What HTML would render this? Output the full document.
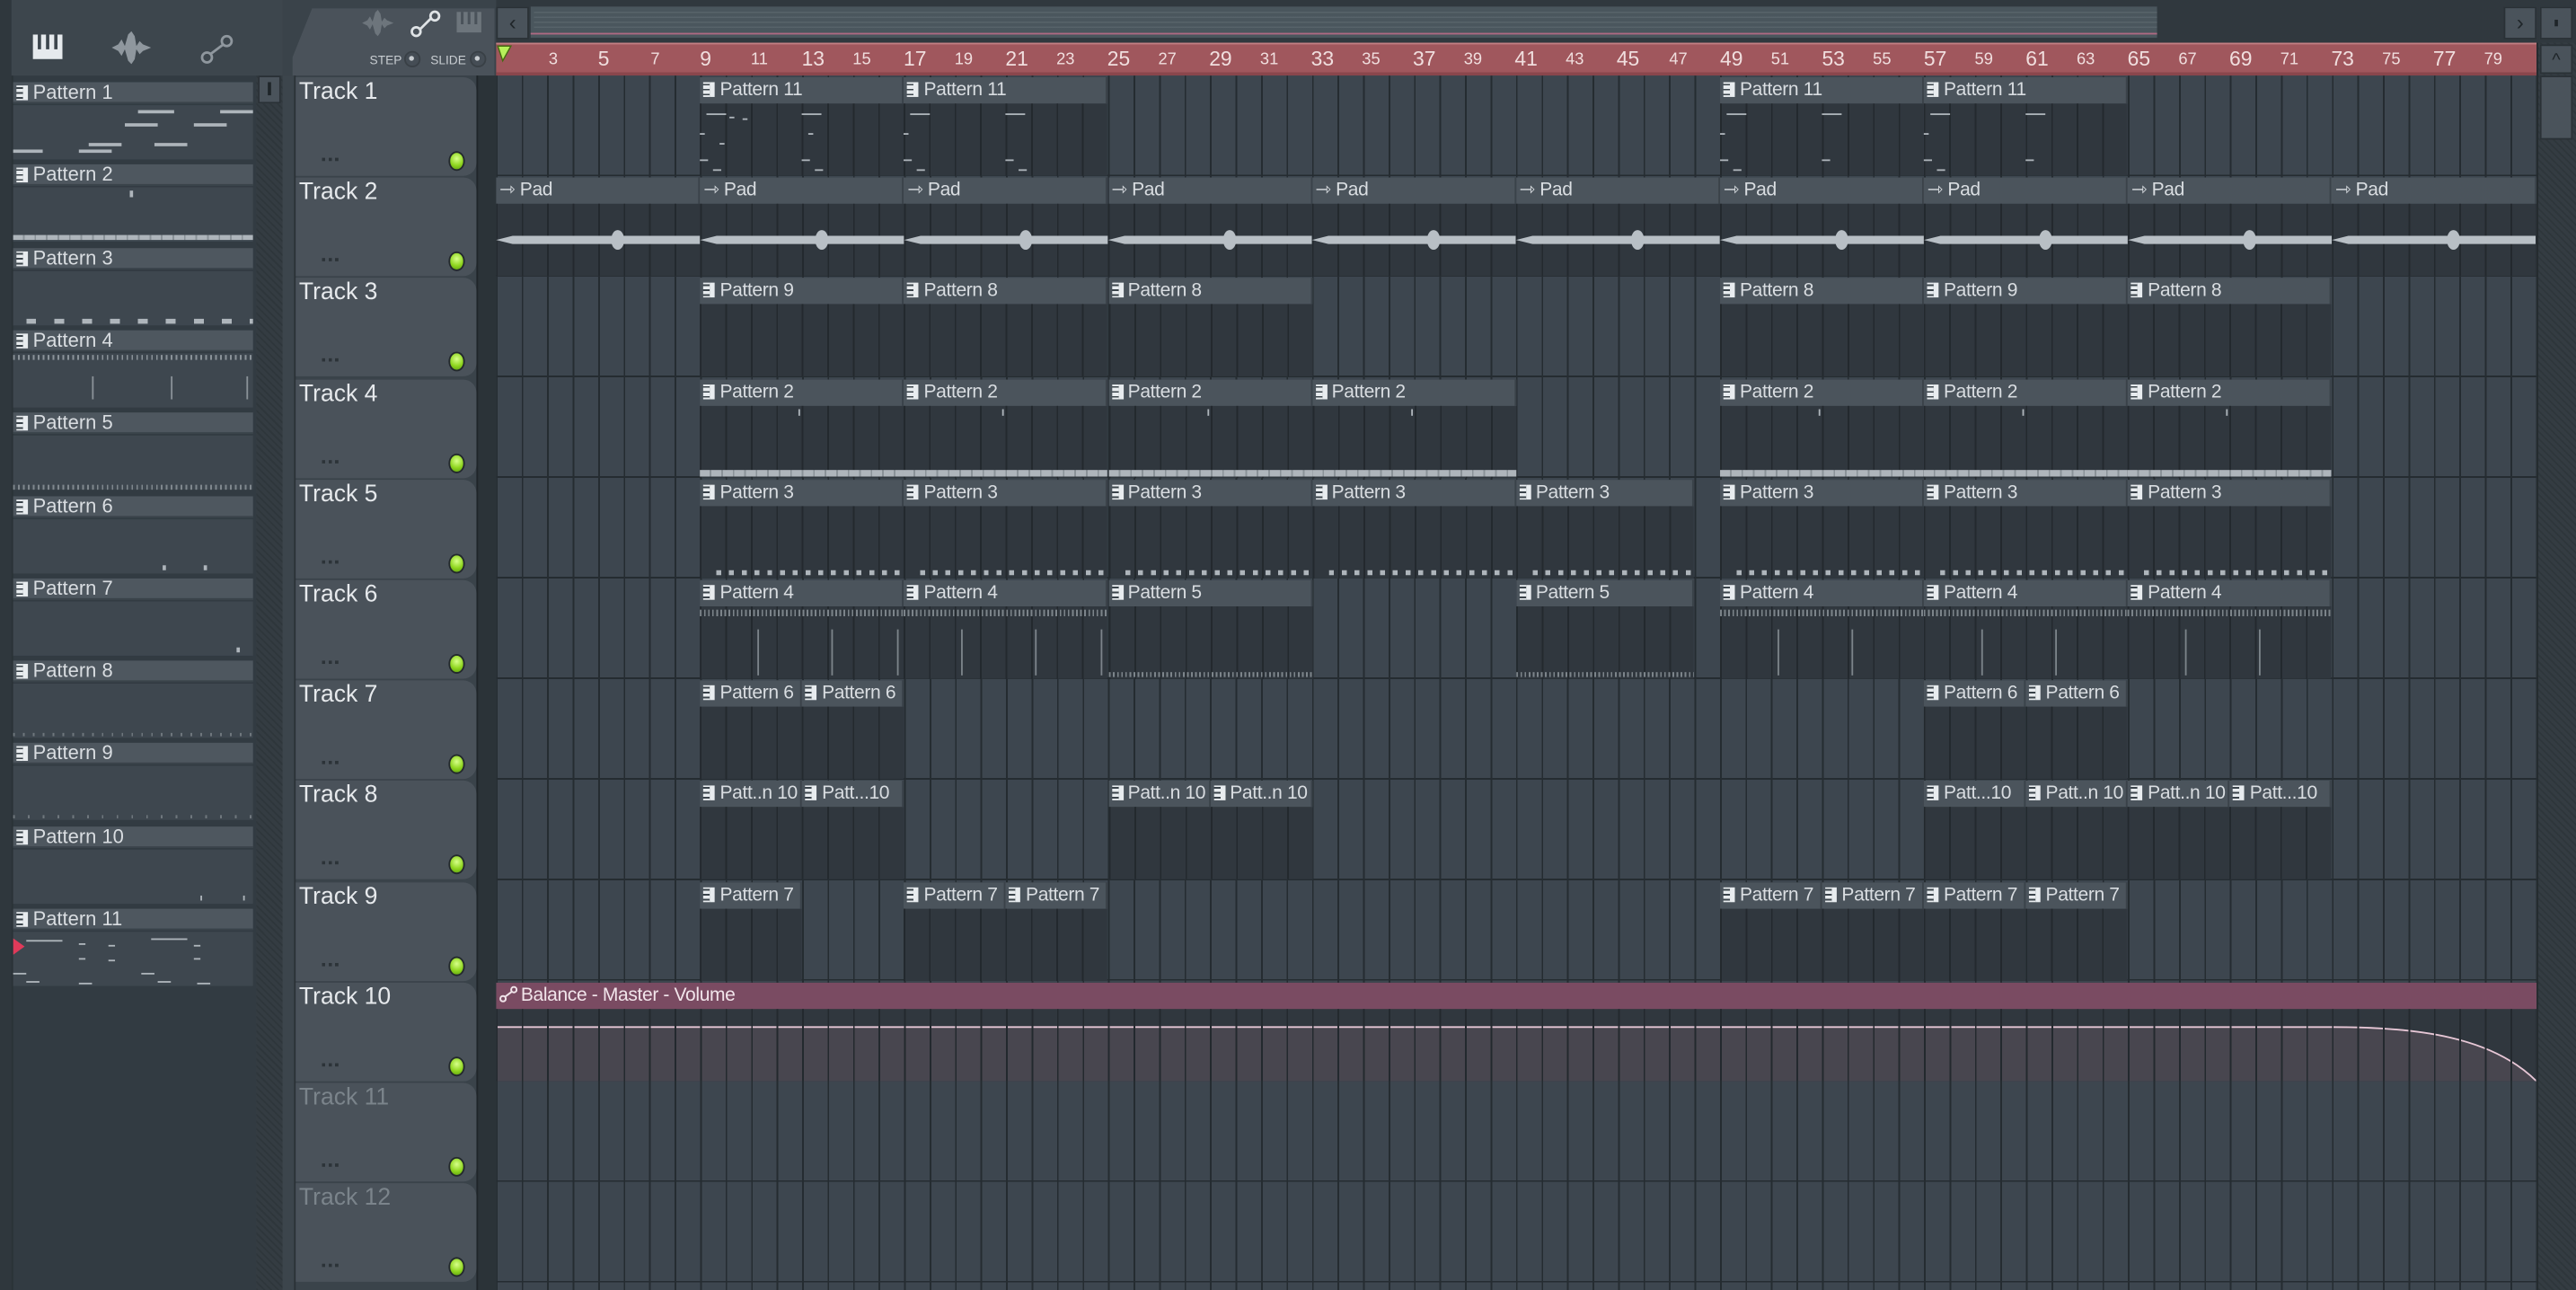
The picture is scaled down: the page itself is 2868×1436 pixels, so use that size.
<!DOCTYPE html>
<html><head><meta charset="utf-8">
<style>
*{margin:0;padding:0;box-sizing:border-box}
html,body{width:2868px;height:1436px;overflow:hidden;background:#3a434a}
#s{position:absolute;left:0;top:0;width:1568px;height:785px;transform:scale(1.82908,1.8293);transform-origin:0 0;font-family:"Liberation Sans Narrow","Liberation Sans",sans-serif;color:#d9dde1;background:#3a434a}
.a{position:absolute}
.pi{display:inline-block;width:7px;height:9px;background:#e8ecef;vertical-align:-1px;margin-right:3px;background:linear-gradient(#e8ecef 0 1px,#3a434a 1px 2px,#e8ecef 2px 4px,#3a434a 4px 5px,#e8ecef 5px 7px,#3a434a 7px 8px,#e8ecef 8px);border-right:3px solid #e8ecef}
.ph{position:absolute;left:8px;width:146px;height:13px;background:#4e575f;font-size:12px;line-height:13px;padding-left:2px;border-bottom:1px solid #3a434a}
.pb{position:absolute;left:8px;width:146px;height:33px;background:#3e474f}
.n{position:absolute;height:2px;background:#aeb5bb}
.th{position:absolute;left:180px;width:110px;height:60px;background:#4a525a;border-radius:0 8px 8px 0}
.th b{position:absolute;left:2px;top:1px;font-weight:normal;font-size:14.5px;color:#e6e9ec}
.th i{position:absolute;left:16px;top:49px;width:10px;height:2px;background:repeating-linear-gradient(90deg,#2c3338 0 2px,transparent 2px 4px)}
.th u{position:absolute;left:93px;top:45px;width:10px;height:12px;border-radius:50%;background:radial-gradient(circle at 50% 35%,#d7ff8a,#8fd61f 55%,#5a9a10);border:1.5px solid #23292d}
.c{position:absolute;height:60px;background:#30373e}
.c .h{position:absolute;left:0;top:0;right:0;height:16px;background:#4b545c;font-size:11.5px;letter-spacing:-0.2px;line-height:16px;padding-left:2px;white-space:nowrap;overflow:hidden;border-right:1px solid #3a4249}
.c .bd{position:absolute;left:0;right:0;top:16px;bottom:0;background:repeating-linear-gradient(90deg,#23292e 0 1px,transparent 1px 15.52px)}
.rn{position:absolute;top:4px;font-size:10px;color:#f0dede}
.rn.b{font-size:12.5px;top:2px}
</style></head><body><div id="s">

<div class="a" style="left:0;top:0;width:7px;height:785px;background:#2f373d"></div>
<div class="a" style="left:7px;top:0;width:165px;height:46px;background:#3d464d"></div>
<svg class="a" style="left:20px;top:21px" width="18" height="15" viewBox="0 0 18 15"><rect x="0" y="0" width="18" height="15" fill="#e6eaed"/><rect x="3" y="0" width="2" height="9" fill="#3d464d"/><rect x="8" y="0" width="2" height="9" fill="#3d464d"/><rect x="13" y="0" width="2" height="9" fill="#3d464d"/></svg>
<svg class="a" style="left:68px;top:19px" width="24" height="20" viewBox="0 0 24 20"><path d="M0 10 L4 8 L6 5 L8 9 L10 2 L12 0 L14 3 L15 9 L17 6 L19 8 L24 10 L19 12 L17 14 L15 11 L14 17 L12 20 L10 18 L8 11 L6 15 L4 12 Z" fill="#8f979e"/></svg>
<svg class="a" style="left:122px;top:21px" width="20" height="18" viewBox="0 0 20 18"><circle cx="4" cy="14" r="3" fill="none" stroke="#8f979e" stroke-width="1.5"/><circle cx="16" cy="4" r="3" fill="none" stroke="#8f979e" stroke-width="1.5"/><path d="M6 12 L14 6" stroke="#8f979e" stroke-width="1.5"/></svg>

<div class="a" style="left:7px;top:46px;width:149px;height:739px;background:#323b42;border-left:1px solid #2a3237"></div>
<div class="ph" style="top:50px"><span class="pi"></span>Pattern 1</div><div class="pb" style="top:64px">
<div class="n" style="left:76px;top:3px;width:22px"></div><div class="n" style="left:126px;top:3px;width:20px"></div><div class="n" style="left:68px;top:11px;width:20px"></div><div class="n" style="left:110px;top:11px;width:20px"></div><div class="n" style="left:46px;top:23px;width:20px"></div><div class="n" style="left:86px;top:23px;width:20px"></div><div class="n" style="left:0;top:27px;width:18px"></div><div class="n" style="left:40px;top:27px;width:20px"></div></div>
<div class="ph" style="top:100px"><span class="pi"></span>Pattern 2</div><div class="pb" style="top:114px"><div class="n" style="left:71px;top:2px;width:2px;height:4px"></div><div class="n" style="left:0;top:29px;width:146px;height:3px;background:repeating-linear-gradient(90deg,#aeb5bb 0 6px,#8a9298 6px 7px)"></div></div>
<div class="ph" style="top:151px"><span class="pi"></span>Pattern 3</div><div class="pb" style="top:165px"><div class="n" style="left:8px;top:29px;width:138px;height:3px;background:repeating-linear-gradient(90deg,#aeb5bb 0 6px,transparent 6px 17px)"></div></div>
<div class="ph" style="top:201px"><span class="pi"></span>Pattern 4</div><div class="pb" style="top:215px"><div class="n" style="left:0;top:1px;width:146px;height:3px;background:repeating-linear-gradient(90deg,#8a9298 0 1px,transparent 1px 3px)"></div><div class="n" style="left:48px;top:14px;width:1px;height:14px;background:#8a9298"></div><div class="n" style="left:96px;top:14px;width:1px;height:14px;background:#8a9298"></div><div class="n" style="left:142px;top:14px;width:1px;height:14px;background:#8a9298"></div></div>
<div class="ph" style="top:251px"><span class="pi"></span>Pattern 5</div><div class="pb" style="top:265px"><div class="n" style="left:0;top:30px;width:146px;height:3px;background:repeating-linear-gradient(90deg,#7f878d 0 1px,transparent 1px 3px)"></div></div>
<div class="ph" style="top:302px"><span class="pi"></span>Pattern 6</div><div class="pb" style="top:316px"><div class="n" style="left:91px;top:28px;width:2px;height:3px"></div><div class="n" style="left:116px;top:28px;width:2px;height:3px"></div></div>
<div class="ph" style="top:352px"><span class="pi"></span>Pattern 7</div><div class="pb" style="top:366px"><div class="n" style="left:136px;top:28px;width:2px;height:3px"></div></div>
<div class="ph" style="top:402px"><span class="pi"></span>Pattern 8</div><div class="pb" style="top:416px"><div class="n" style="left:0;top:30px;width:146px;height:2px;background:repeating-linear-gradient(90deg,#6f777d 0 1px,transparent 1px 6px)"></div></div>
<div class="ph" style="top:452px"><span class="pi"></span>Pattern 9</div><div class="pb" style="top:466px"><div class="n" style="left:0;top:30px;width:146px;height:2px;background:repeating-linear-gradient(90deg,#6f777d 0 1px,transparent 1px 9px)"></div></div>
<div class="ph" style="top:503px"><span class="pi"></span>Pattern 10</div><div class="pb" style="top:517px"><div class="n" style="left:114px;top:28px;width:1px;height:3px"></div><div class="n" style="left:140px;top:28px;width:1px;height:3px"></div></div>
<div class="ph" style="top:553px"><span class="pi"></span>Pattern 11</div><div class="pb" style="top:567px">
<div class="n" style="left:8px;top:5px;width:22px;height:1px"></div><div class="n" style="left:40px;top:7px;width:4px;height:1px"></div><div class="n" style="left:58px;top:8px;width:4px;height:1px"></div><div class="n" style="left:84px;top:4px;width:22px;height:1px"></div><div class="n" style="left:110px;top:8px;width:4px;height:1px"></div><div class="n" style="left:40px;top:16px;width:4px;height:1px"></div><div class="n" style="left:58px;top:17px;width:4px;height:1px"></div><div class="n" style="left:110px;top:16px;width:4px;height:1px"></div><div class="n" style="left:0;top:25px;width:8px;height:1px"></div><div class="n" style="left:78px;top:25px;width:8px;height:1px"></div><div class="n" style="left:8px;top:30px;width:8px;height:1px"></div><div class="n" style="left:40px;top:31px;width:8px;height:1px"></div><div class="n" style="left:88px;top:30px;width:8px;height:1px"></div><div class="n" style="left:112px;top:31px;width:8px;height:1px"></div>
<svg class="a" style="left:0;top:4px" width="8" height="10"><path d="M0 0 L7 5 L0 10 Z" fill="#e03a5a"/></svg></div>

<div class="a" style="left:156px;top:46px;width:16px;height:739px;background:repeating-linear-gradient(45deg,#2e363b 0 1px,#343c42 1px 3px)"></div>
<div class="a" style="left:157px;top:46px;width:14px;height:17px;background:#4a535b;border:1px solid #2a3136"></div>
<div class="a" style="left:163px;top:50px;width:2px;height:8px;background:#1f2529"></div>
<div class="a" style="left:172px;top:46px;width:8px;height:739px;background:#3c454c;border-right:1px solid #2a3136"></div>

<div class="a" style="left:178px;top:5px;width:123px;height:41px;background:#4a525a;clip-path:polygon(12px 0,100% 0,100% 100%,0 100%,0 30px)"></div>
<svg class="a" style="left:219px;top:6px" width="22" height="16" viewBox="0 0 24 20"><path d="M0 10 L4 8 L6 5 L8 9 L10 2 L12 0 L14 3 L15 9 L17 6 L19 8 L24 10 L19 12 L17 14 L15 11 L14 17 L12 20 L10 18 L8 11 L6 15 L4 12 Z" fill="#6d757c"/></svg>
<svg class="a" style="left:249px;top:6px" width="20" height="17" viewBox="0 0 20 18"><circle cx="4" cy="14" r="2.8" fill="none" stroke="#dfe3e6" stroke-width="1.6"/><circle cx="16" cy="4" r="2.8" fill="none" stroke="#dfe3e6" stroke-width="1.6"/><path d="M6.5 12.5 L13.5 5.5" stroke="#dfe3e6" stroke-width="1.6"/></svg>
<svg class="a" style="left:278px;top:7px" width="15" height="13" viewBox="0 0 18 15"><rect width="18" height="15" fill="#6d757c"/><rect x="3" width="2" height="9" fill="#4a525a"/><rect x="8" width="2" height="9" fill="#4a525a"/><rect x="13" width="2" height="9" fill="#4a525a"/></svg>
<div class="a" style="left:225px;top:32px;font-size:7.5px;color:#c7ccd0">STEP</div>
<div class="a" style="left:246px;top:31px;width:10px;height:10px;border-radius:50%;border:1.5px solid #394046;background:#454d55"><div class="a" style="left:2px;top:2px;width:3px;height:3px;border-radius:50%;background:#c7ccd0"></div></div>
<div class="a" style="left:262px;top:32px;font-size:7.5px;color:#c7ccd0">SLIDE</div>
<div class="a" style="left:286px;top:31px;width:10px;height:10px;border-radius:50%;border:1.5px solid #394046;background:#454d55"><div class="a" style="left:2px;top:2px;width:3px;height:3px;border-radius:50%;background:#c7ccd0"></div></div>

<div class="a" style="left:302px;top:0;width:1266px;height:26px;background:#30383e"></div>
<div class="a" style="left:302px;top:4px;width:20px;height:20px;background:#4a535b;border:1px solid #2a3136;font-size:13px;line-height:18px;text-align:center;color:#1f2529">&lsaquo;</div>
<div class="a" style="left:323px;top:4px;width:990px;height:19px;background:#4a565d"></div>
<div class="a" style="left:325px;top:7px;width:988px;height:12px;background:repeating-linear-gradient(#5d696f 0 1px,transparent 1px 3px);opacity:.7"></div>
<div class="a" style="left:323px;top:20px;width:990px;height:1px;background:#b06a84"></div>
<div class="a" style="left:1524px;top:4px;width:20px;height:20px;background:#4a535b;border:1px solid #2a3136;font-size:13px;line-height:18px;text-align:center;color:#1f2529">&rsaquo;</div>
<div class="a" style="left:1546px;top:4px;width:20px;height:20px;background:#4a535b;border:1px solid #2a3136"><div class="a" style="left:8px;top:7px;width:2px;height:4px;background:#1f2529"></div></div>

<div class="a" style="left:302px;top:26px;width:1242px;height:20px;background:#a0575d;border-top:1px solid #c27f83;border-bottom:2px solid #8a464c">
<svg class="a" style="left:0;top:0" width="10" height="12"><path d="M1 1 L9 1 L4 10 Z" fill="#b6f05a" stroke="#456b12" stroke-width=".8"/></svg>
<span class="rn" style="left:32px">3</span><span class="rn b" style="left:62px">5</span><span class="rn" style="left:94px">7</span><span class="rn b" style="left:124px">9</span><span class="rn" style="left:155px">11</span><span class="rn b" style="left:186px">13</span><span class="rn" style="left:217px">15</span><span class="rn b" style="left:248px">17</span><span class="rn" style="left:279px">19</span><span class="rn b" style="left:310px">21</span><span class="rn" style="left:341px">23</span><span class="rn b" style="left:372px">25</span><span class="rn" style="left:403px">27</span><span class="rn b" style="left:434px">29</span><span class="rn" style="left:465px">31</span><span class="rn b" style="left:496px">33</span><span class="rn" style="left:527px">35</span><span class="rn b" style="left:558px">37</span><span class="rn" style="left:589px">39</span><span class="rn b" style="left:620px">41</span><span class="rn" style="left:651px">43</span><span class="rn b" style="left:682px">45</span><span class="rn" style="left:714px">47</span><span class="rn b" style="left:745px">49</span><span class="rn" style="left:776px">51</span><span class="rn b" style="left:807px">53</span><span class="rn" style="left:838px">55</span><span class="rn b" style="left:869px">57</span><span class="rn" style="left:900px">59</span><span class="rn b" style="left:931px">61</span><span class="rn" style="left:962px">63</span><span class="rn b" style="left:993px">65</span><span class="rn" style="left:1024px">67</span><span class="rn b" style="left:1055px">69</span><span class="rn" style="left:1086px">71</span><span class="rn b" style="left:1117px">73</span><span class="rn" style="left:1148px">75</span><span class="rn b" style="left:1179px">77</span><span class="rn" style="left:1210px">79</span>
</div>

<div class="a" style="left:1544px;top:26px;width:24px;height:759px;background:repeating-linear-gradient(45deg,#2e363b 0 1px,#343c42 1px 3px);border-left:1px solid #22292d"></div>
<div class="a" style="left:1546px;top:27px;width:20px;height:18px;background:#4a535b;border:1px solid #2a3136;font-size:11px;line-height:18px;text-align:center;color:#1f2529">^</div>
<div class="a" style="left:1546px;top:46px;width:20px;height:39px;background:#4a535b;border:1px solid #2a3136"></div>

<div class="a" style="left:290px;top:46px;width:12px;height:739px;background:#2b3338;border-left:1px solid #1f2529"></div>

<div class="th" style="top:47px"><b>Track 1</b><i></i><u></u></div>
<div class="th" style="top:108.2px"><b>Track 2</b><i></i><u></u></div>
<div class="th" style="top:169.4px"><b>Track 3</b><i></i><u></u></div>
<div class="th" style="top:230.6px"><b>Track 4</b><i></i><u></u></div>
<div class="th" style="top:291.8px"><b>Track 5</b><i></i><u></u></div>
<div class="th" style="top:353px"><b>Track 6</b><i></i><u></u></div>
<div class="th" style="top:414.2px"><b>Track 7</b><i></i><u></u></div>
<div class="th" style="top:475.4px"><b>Track 8</b><i></i><u></u></div>
<div class="th" style="top:536.6px"><b>Track 9</b><i></i><u></u></div>
<div class="th" style="top:597.8px"><b>Track 10</b><i></i><u></u></div>
<div class="th" style="top:659px"><b style="color:#7b848b">Track 11</b><i></i><u></u></div>
<div class="th" style="top:720.2px"><b style="color:#7b848b">Track 12</b><i></i><u></u></div>

<div class="a" id="g" style="left:302px;top:46px;width:1242px;height:739px;overflow:hidden;background:repeating-linear-gradient(#3d464f 0 60.2px,#252c31 60.2px 61.2px)">
<div class="a" style="left:0;top:0;width:1242px;height:739px;background:repeating-linear-gradient(90deg,#252c31 0 1px,transparent 1px 15.52px)"></div>

<div class="c" style="left:124.2px;top:1px;width:124.2px"><div class="h"><span class="pi"></span>Pattern 11</div><div class="bd"></div><div class="n" style="left:4px;top:22px;width:12px;height:1px"></div><div class="n" style="left:18px;top:24px;width:3px;height:1px"></div><div class="n" style="left:26px;top:25px;width:3px;height:1px"></div><div class="n" style="left:0;top:34px;width:3px;height:1px"></div><div class="n" style="left:12px;top:40px;width:3px;height:1px"></div><div class="n" style="left:0;top:50px;width:5px;height:1px"></div><div class="n" style="left:8px;top:56px;width:5px;height:1px"></div><div class="n" style="left:62px;top:22px;width:12px;height:1px"></div><div class="n" style="left:66px;top:34px;width:3px;height:1px"></div><div class="n" style="left:62px;top:50px;width:5px;height:1px"></div><div class="n" style="left:70px;top:56px;width:5px;height:1px"></div></div>
<div class="c" style="left:248.3px;top:1px;width:124.2px"><div class="h"><span class="pi"></span>Pattern 11</div><div class="bd"></div><div class="n" style="left:4px;top:22px;width:12px;height:1px"></div><div class="n" style="left:0;top:34px;width:3px;height:1px"></div><div class="n" style="left:0;top:50px;width:5px;height:1px"></div><div class="n" style="left:8px;top:56px;width:5px;height:1px"></div><div class="n" style="left:62px;top:22px;width:12px;height:1px"></div><div class="n" style="left:62px;top:50px;width:5px;height:1px"></div><div class="n" style="left:70px;top:56px;width:5px;height:1px"></div></div>
<div class="c" style="left:745px;top:1px;width:124.2px"><div class="h"><span class="pi"></span>Pattern 11</div><div class="bd"></div><div class="n" style="left:4px;top:22px;width:12px;height:1px"></div><div class="n" style="left:0;top:34px;width:3px;height:1px"></div><div class="n" style="left:0;top:50px;width:5px;height:1px"></div><div class="n" style="left:8px;top:56px;width:5px;height:1px"></div><div class="n" style="left:62px;top:22px;width:12px;height:1px"></div><div class="n" style="left:62px;top:50px;width:5px;height:1px"></div></div>
<div class="c" style="left:869.1px;top:1px;width:124.2px"><div class="h"><span class="pi"></span>Pattern 11</div><div class="bd"></div><div class="n" style="left:4px;top:22px;width:12px;height:1px"></div><div class="n" style="left:0;top:34px;width:3px;height:1px"></div><div class="n" style="left:0;top:50px;width:5px;height:1px"></div><div class="n" style="left:8px;top:56px;width:5px;height:1px"></div><div class="n" style="left:62px;top:22px;width:12px;height:1px"></div><div class="n" style="left:62px;top:50px;width:5px;height:1px"></div></div>

<div class="c" style="left:0;top:62.2px;width:1242px;background:transparent">
<div class="h" style="left:0;width:124.2px">&#x21FE; Pad</div><div class="h" style="left:124.2px;width:124.2px">&#x21FE; Pad</div><div class="h" style="left:248.3px;width:124.2px">&#x21FE; Pad</div><div class="h" style="left:372.5px;width:124.2px">&#x21FE; Pad</div><div class="h" style="left:496.6px;width:124.2px">&#x21FE; Pad</div><div class="h" style="left:620.8px;width:124.2px">&#x21FE; Pad</div><div class="h" style="left:745px;width:124.2px">&#x21FE; Pad</div><div class="h" style="left:869.1px;width:124.2px">&#x21FE; Pad</div><div class="h" style="left:993.3px;width:124.2px">&#x21FE; Pad</div><div class="h" style="left:1117.4px;width:124.6px">&#x21FE; Pad</div>
<div class="a" style="left:0;top:16px;width:1242px;height:44px;background:#30373e"></div>
<div class="a" style="left:0;top:16px;width:1242px;height:44px;background:repeating-linear-gradient(90deg,#23292e 0 1px,transparent 1px 15.52px)"></div>
<svg class="a" style="left:0;top:31px" width="1242" height="14"><defs><g id="w"><path d="M0 7 L10 4.5 L124 4.5 L124 9.5 L10 9.5 Z" fill="#b8bfc5"/><ellipse cx="74" cy="7" rx="4" ry="6" fill="#b8bfc5"/></g></defs>
<use href="#w" x="0"/><use href="#w" x="124.2"/><use href="#w" x="248.3"/><use href="#w" x="372.5"/><use href="#w" x="496.6"/><use href="#w" x="620.8"/><use href="#w" x="745"/><use href="#w" x="869.1"/><use href="#w" x="993.3"/><use href="#w" x="1117.4"/></svg>
</div>

<div class="c" style="left:124.2px;top:123.4px;width:124.2px"><div class="h"><span class="pi"></span>Pattern 9</div><div class="bd"></div></div>
<div class="c" style="left:248.3px;top:123.4px;width:124.2px"><div class="h"><span class="pi"></span>Pattern 8</div><div class="bd"></div></div>
<div class="c" style="left:372.5px;top:123.4px;width:124.2px"><div class="h"><span class="pi"></span>Pattern 8</div><div class="bd"></div></div>
<div class="c" style="left:745px;top:123.4px;width:124.2px"><div class="h"><span class="pi"></span>Pattern 8</div><div class="bd"></div></div>
<div class="c" style="left:869.1px;top:123.4px;width:124.2px"><div class="h"><span class="pi"></span>Pattern 9</div><div class="bd"></div></div>
<div class="c" style="left:993.3px;top:123.4px;width:124.2px"><div class="h"><span class="pi"></span>Pattern 8</div><div class="bd"></div></div>

<div class="c" style="left:124.2px;top:184.6px;width:124.2px"><div class="h"><span class="pi"></span>Pattern 2</div><div class="bd"></div><div class="n" style="left:60px;top:18px;width:1px;height:4px"></div><div class="n" style="left:0;top:55px;width:124px;height:4px;background:repeating-linear-gradient(90deg,#aeb5bb 0 6px,#8a9298 6px 7px)"></div></div>
<div class="c" style="left:248.3px;top:184.6px;width:124.2px"><div class="h"><span class="pi"></span>Pattern 2</div><div class="bd"></div><div class="n" style="left:60px;top:18px;width:1px;height:4px"></div><div class="n" style="left:0;top:55px;width:124px;height:4px;background:repeating-linear-gradient(90deg,#aeb5bb 0 6px,#8a9298 6px 7px)"></div></div>
<div class="c" style="left:372.5px;top:184.6px;width:124.2px"><div class="h"><span class="pi"></span>Pattern 2</div><div class="bd"></div><div class="n" style="left:60px;top:18px;width:1px;height:4px"></div><div class="n" style="left:0;top:55px;width:124px;height:4px;background:repeating-linear-gradient(90deg,#aeb5bb 0 6px,#8a9298 6px 7px)"></div></div>
<div class="c" style="left:496.6px;top:184.6px;width:124.2px"><div class="h"><span class="pi"></span>Pattern 2</div><div class="bd"></div><div class="n" style="left:60px;top:18px;width:1px;height:4px"></div><div class="n" style="left:0;top:55px;width:124px;height:4px;background:repeating-linear-gradient(90deg,#aeb5bb 0 6px,#8a9298 6px 7px)"></div></div>
<div class="c" style="left:745px;top:184.6px;width:124.2px"><div class="h"><span class="pi"></span>Pattern 2</div><div class="bd"></div><div class="n" style="left:60px;top:18px;width:1px;height:4px"></div><div class="n" style="left:0;top:55px;width:124px;height:4px;background:repeating-linear-gradient(90deg,#aeb5bb 0 6px,#8a9298 6px 7px)"></div></div>
<div class="c" style="left:869.1px;top:184.6px;width:124.2px"><div class="h"><span class="pi"></span>Pattern 2</div><div class="bd"></div><div class="n" style="left:60px;top:18px;width:1px;height:4px"></div><div class="n" style="left:0;top:55px;width:124px;height:4px;background:repeating-linear-gradient(90deg,#aeb5bb 0 6px,#8a9298 6px 7px)"></div></div>
<div class="c" style="left:993.3px;top:184.6px;width:124.2px"><div class="h"><span class="pi"></span>Pattern 2</div><div class="bd"></div><div class="n" style="left:60px;top:18px;width:1px;height:4px"></div><div class="n" style="left:0;top:55px;width:124px;height:4px;background:repeating-linear-gradient(90deg,#aeb5bb 0 6px,#8a9298 6px 7px)"></div></div>

<div class="c" style="left:124.2px;top:245.8px;width:124.2px"><div class="h"><span class="pi"></span>Pattern 3</div><div class="bd"></div><div class="n" style="left:10px;top:55px;width:114px;height:3px;background:repeating-linear-gradient(90deg,#aeb5bb 0 3px,transparent 3px 7.76px)"></div></div>
<div class="c" style="left:248.3px;top:245.8px;width:124.2px"><div class="h"><span class="pi"></span>Pattern 3</div><div class="bd"></div><div class="n" style="left:10px;top:55px;width:114px;height:3px;background:repeating-linear-gradient(90deg,#aeb5bb 0 3px,transparent 3px 7.76px)"></div></div>
<div class="c" style="left:372.5px;top:245.8px;width:124.2px"><div class="h"><span class="pi"></span>Pattern 3</div><div class="bd"></div><div class="n" style="left:10px;top:55px;width:114px;height:3px;background:repeating-linear-gradient(90deg,#aeb5bb 0 3px,transparent 3px 7.76px)"></div></div>
<div class="c" style="left:496.6px;top:245.8px;width:124.2px"><div class="h"><span class="pi"></span>Pattern 3</div><div class="bd"></div><div class="n" style="left:10px;top:55px;width:114px;height:3px;background:repeating-linear-gradient(90deg,#aeb5bb 0 3px,transparent 3px 7.76px)"></div></div>
<div class="c" style="left:620.8px;top:245.8px;width:108.6px"><div class="h"><span class="pi"></span>Pattern 3</div><div class="bd"></div><div class="n" style="left:10px;top:55px;width:98px;height:3px;background:repeating-linear-gradient(90deg,#aeb5bb 0 3px,transparent 3px 7.76px)"></div></div>
<div class="c" style="left:745px;top:245.8px;width:124.2px"><div class="h"><span class="pi"></span>Pattern 3</div><div class="bd"></div><div class="n" style="left:10px;top:55px;width:114px;height:3px;background:repeating-linear-gradient(90deg,#aeb5bb 0 3px,transparent 3px 7.76px)"></div></div>
<div class="c" style="left:869.1px;top:245.8px;width:124.2px"><div class="h"><span class="pi"></span>Pattern 3</div><div class="bd"></div><div class="n" style="left:10px;top:55px;width:114px;height:3px;background:repeating-linear-gradient(90deg,#aeb5bb 0 3px,transparent 3px 7.76px)"></div></div>
<div class="c" style="left:993.3px;top:245.8px;width:124.2px"><div class="h"><span class="pi"></span>Pattern 3</div><div class="bd"></div><div class="n" style="left:10px;top:55px;width:114px;height:3px;background:repeating-linear-gradient(90deg,#aeb5bb 0 3px,transparent 3px 7.76px)"></div></div>

<div class="c" style="left:124.2px;top:307px;width:124.2px"><div class="h"><span class="pi"></span>Pattern 4</div><div class="bd"></div><div class="n" style="left:0;top:18px;width:124px;height:4px;background:repeating-linear-gradient(90deg,#7c848a 0 1px,transparent 1px 2.5px)"></div><div class="n" style="left:35px;top:30px;width:1px;height:28px;background:#7c848a"></div><div class="n" style="left:80px;top:30px;width:1px;height:28px;background:#7c848a"></div><div class="n" style="left:120px;top:30px;width:1px;height:28px;background:#7c848a"></div></div>
<div class="c" style="left:248.3px;top:307px;width:124.2px"><div class="h"><span class="pi"></span>Pattern 4</div><div class="bd"></div><div class="n" style="left:0;top:18px;width:124px;height:4px;background:repeating-linear-gradient(90deg,#7c848a 0 1px,transparent 1px 2.5px)"></div><div class="n" style="left:35px;top:30px;width:1px;height:28px;background:#7c848a"></div><div class="n" style="left:80px;top:30px;width:1px;height:28px;background:#7c848a"></div><div class="n" style="left:120px;top:30px;width:1px;height:28px;background:#7c848a"></div></div>
<div class="c" style="left:372.5px;top:307px;width:124.2px"><div class="h"><span class="pi"></span>Pattern 5</div><div class="bd"></div><div class="n" style="left:0;top:56px;width:124px;height:3px;background:repeating-linear-gradient(90deg,#7c848a 0 1px,transparent 1px 2.5px)"></div></div>
<div class="c" style="left:620.8px;top:307px;width:108.6px"><div class="h"><span class="pi"></span>Pattern 5</div><div class="bd"></div><div class="n" style="left:0;top:56px;width:108px;height:3px;background:repeating-linear-gradient(90deg,#7c848a 0 1px,transparent 1px 2.5px)"></div></div>
<div class="c" style="left:745px;top:307px;width:124.2px"><div class="h"><span class="pi"></span>Pattern 4</div><div class="bd"></div><div class="n" style="left:0;top:18px;width:124px;height:4px;background:repeating-linear-gradient(90deg,#7c848a 0 1px,transparent 1px 2.5px)"></div><div class="n" style="left:35px;top:30px;width:1px;height:28px;background:#7c848a"></div><div class="n" style="left:80px;top:30px;width:1px;height:28px;background:#7c848a"></div></div>
<div class="c" style="left:869.1px;top:307px;width:124.2px"><div class="h"><span class="pi"></span>Pattern 4</div><div class="bd"></div><div class="n" style="left:0;top:18px;width:124px;height:4px;background:repeating-linear-gradient(90deg,#7c848a 0 1px,transparent 1px 2.5px)"></div><div class="n" style="left:35px;top:30px;width:1px;height:28px;background:#7c848a"></div><div class="n" style="left:80px;top:30px;width:1px;height:28px;background:#7c848a"></div></div>
<div class="c" style="left:993.3px;top:307px;width:124.2px"><div class="h"><span class="pi"></span>Pattern 4</div><div class="bd"></div><div class="n" style="left:0;top:18px;width:124px;height:4px;background:repeating-linear-gradient(90deg,#7c848a 0 1px,transparent 1px 2.5px)"></div><div class="n" style="left:35px;top:30px;width:1px;height:28px;background:#7c848a"></div><div class="n" style="left:80px;top:30px;width:1px;height:28px;background:#7c848a"></div></div>

<div class="c" style="left:124.2px;top:368.2px;width:62.1px"><div class="h"><span class="pi"></span>Pattern 6</div><div class="bd"></div></div>
<div class="c" style="left:186.3px;top:368.2px;width:62.1px"><div class="h"><span class="pi"></span>Pattern 6</div><div class="bd"></div></div>
<div class="c" style="left:869.1px;top:368.2px;width:62.1px"><div class="h"><span class="pi"></span>Pattern 6</div><div class="bd"></div></div>
<div class="c" style="left:931.2px;top:368.2px;width:62.1px"><div class="h"><span class="pi"></span>Pattern 6</div><div class="bd"></div></div>

<div class="c" style="left:124.2px;top:429.4px;width:62.1px"><div class="h"><span class="pi"></span>Patt..n 10</div><div class="bd"></div></div>
<div class="c" style="left:186.3px;top:429.4px;width:62.1px"><div class="h"><span class="pi"></span>Patt...10</div><div class="bd"></div></div>
<div class="c" style="left:372.5px;top:429.4px;width:62.1px"><div class="h"><span class="pi"></span>Patt..n 10</div><div class="bd"></div></div>
<div class="c" style="left:434.6px;top:429.4px;width:62.1px"><div class="h"><span class="pi"></span>Patt..n 10</div><div class="bd"></div></div>
<div class="c" style="left:869.1px;top:429.4px;width:62.1px"><div class="h"><span class="pi"></span>Patt...10</div><div class="bd"></div></div>
<div class="c" style="left:931.2px;top:429.4px;width:62.1px"><div class="h"><span class="pi"></span>Patt..n 10</div><div class="bd"></div></div>
<div class="c" style="left:993.3px;top:429.4px;width:62.1px"><div class="h"><span class="pi"></span>Patt..n 10</div><div class="bd"></div></div>
<div class="c" style="left:1055.4px;top:429.4px;width:62.1px"><div class="h"><span class="pi"></span>Patt...10</div><div class="bd"></div></div>

<div class="c" style="left:124.2px;top:490.6px;width:62.1px"><div class="h"><span class="pi"></span>Pattern 7</div><div class="bd"></div></div>
<div class="c" style="left:248.3px;top:490.6px;width:62.1px"><div class="h"><span class="pi"></span>Pattern 7</div><div class="bd"></div></div>
<div class="c" style="left:310.4px;top:490.6px;width:62.1px"><div class="h"><span class="pi"></span>Pattern 7</div><div class="bd"></div></div>
<div class="c" style="left:745px;top:490.6px;width:62.1px"><div class="h"><span class="pi"></span>Pattern 7</div><div class="bd"></div></div>
<div class="c" style="left:807px;top:490.6px;width:62.1px"><div class="h"><span class="pi"></span>Pattern 7</div><div class="bd"></div></div>
<div class="c" style="left:869.1px;top:490.6px;width:62.1px"><div class="h"><span class="pi"></span>Pattern 7</div><div class="bd"></div></div>
<div class="c" style="left:931.2px;top:490.6px;width:62.1px"><div class="h"><span class="pi"></span>Pattern 7</div><div class="bd"></div></div>

<div class="c" style="left:0;top:551.8px;width:1242px;background:#30373e">
<div class="h" style="background:#7a4b62;color:#f1e4ea;border:none"><svg width="11" height="10" viewBox="0 0 20 18" style="vertical-align:-1px;margin-right:2px"><circle cx="4" cy="14" r="3" fill="none" stroke="#f1e4ea" stroke-width="2"/><circle cx="16" cy="4" r="3" fill="none" stroke="#f1e4ea" stroke-width="2"/><path d="M6 12 L14 6" stroke="#f1e4ea" stroke-width="2"/></svg>Balance - Master - Volume</div>
<svg class="a" style="left:0;top:16px" width="1242" height="44"><path d="M0 11 L1118 11 C1170 11 1215 17 1242 44 L0 44 Z" fill="#48464f"/><path d="M0 11 L1118 11 C1170 11 1215 17 1242 44" fill="none" stroke="#e7c7d6" stroke-width="1"/></svg>
<div class="bd"></div>
</div>
</div>

</div></body></html>
